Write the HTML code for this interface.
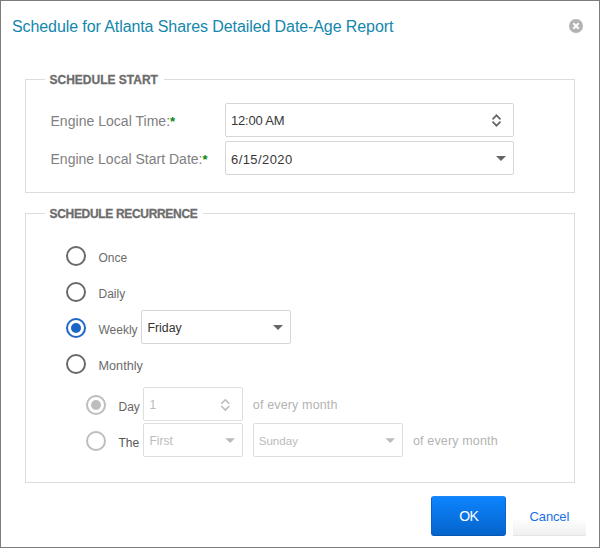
<!DOCTYPE html>
<html><head><meta charset="utf-8">
<style>
html,body{margin:0;padding:0;background:#fff;}
body{width:600px;height:548px;position:relative;overflow:hidden;font-family:"Liberation Sans",sans-serif;}
.frame{position:absolute;left:0;top:0;width:598px;height:546px;border:1px solid #7c7c7c;}
.t{position:absolute;white-space:nowrap;line-height:1;}
.fs{position:absolute;border:1px solid #dcdcdc;box-sizing:border-box;}
.gap{position:absolute;background:#fff;height:3px;}
.inp{position:absolute;border:1px solid #d6d6d6;border-radius:2px;box-sizing:border-box;background:#fff;}
.rad{position:absolute;width:20px;height:20px;border-radius:50%;box-sizing:border-box;border:2px solid #6a6a6a;}
.dot{position:absolute;left:3px;top:3px;width:10px;height:10px;border-radius:50%;}
svg{position:absolute;overflow:visible;}
</style></head>
<body>
<div class="frame"></div>

<div class="t" style="left:12px;top:18.6px;font-size:16px;color:#1387ab;letter-spacing:-0.09px">Schedule for Atlanta Shares Detailed Date-Age Report</div>

<!-- close icon -->
<svg style="left:569px;top:19px" width="14" height="14" viewBox="0 0 14 14">
  <circle cx="7" cy="7" r="7" fill="#b3b3b3"/>
  <path d="M4.3 4.3 L9.7 9.7 M9.7 4.3 L4.3 9.7" stroke="#fff" stroke-width="2.1" stroke-linecap="butt"/>
</svg>

<!-- fieldset 1 -->
<div class="fs" style="left:25px;top:79px;width:550px;height:114px;"></div>
<div class="gap" style="left:45px;top:78px;width:119px;"></div>
<div class="t" style="left:49.5px;top:73.8px;font-size:12px;font-weight:bold;color:#6c6c6c;-webkit-text-stroke:0.3px #6c6c6c;">SCHEDULE START</div>

<div class="t" style="left:50.5px;top:114.3px;font-size:14px;color:#808080;letter-spacing:0.03px">Engine Local Time:<span style="color:#0a870a;font-weight:bold;font-size:13px;position:relative;top:-0.5px;left:0px;letter-spacing:0">*</span></div>
<div class="t" style="left:50.5px;top:152.1px;font-size:14px;color:#808080;letter-spacing:0.01px">Engine Local Start Date:<span style="color:#0a870a;font-weight:bold;font-size:13px;position:relative;top:-0.5px;left:0px;letter-spacing:0">*</span></div>

<div class="inp" style="left:225px;top:103px;width:289px;height:34px;"></div>
<div class="t" style="left:231px;top:114.3px;font-size:13px;color:#383838;letter-spacing:-0.2px">12:00 AM</div>
<svg style="left:0;top:0" width="600" height="548">
  <path d="M492.5 119.3 L496.5 115.3 L500.5 119.3 M492.5 121.7 L496.5 125.7 L500.5 121.7" stroke="#666" stroke-width="1.7" fill="none"/>
</svg>

<div class="inp" style="left:225px;top:141px;width:289px;height:34px;"></div>
<div class="t" style="left:231px;top:152.5px;font-size:13px;color:#383838;letter-spacing:0.42px">6/15/2020</div>
<svg style="left:0;top:0" width="600" height="548">
  <path d="M496 156 L506 156 L501 161 Z" fill="#666"/>
</svg>

<!-- fieldset 2 -->
<div class="fs" style="left:25px;top:213px;width:550px;height:270px;"></div>
<div class="gap" style="left:45px;top:212px;width:158px;"></div>
<div class="t" style="left:49.5px;top:208.2px;font-size:12px;font-weight:bold;color:#6c6c6c;-webkit-text-stroke:0.3px #6c6c6c;letter-spacing:-0.32px">SCHEDULE RECURRENCE</div>

<div class="rad" style="left:66px;top:246px;"></div>
<div class="t" style="left:98.5px;top:252.1px;font-size:12px;color:#6b6b6b;">Once</div>
<div class="rad" style="left:66px;top:282px;"></div>
<div class="t" style="left:98.5px;top:288.1px;font-size:12px;color:#6b6b6b;">Daily</div>
<div class="rad" style="left:66px;top:318px;border-color:#1c67c6;"><div class="dot" style="background:#1c67c6"></div></div>
<div class="t" style="left:98.5px;top:324.2px;font-size:12px;color:#6b6b6b;">Weekly</div>
<div class="rad" style="left:66px;top:354px;"></div>
<div class="t" style="left:98.5px;top:359.9px;font-size:12.7px;color:#6b6b6b;">Monthly</div>

<div class="inp" style="left:141px;top:310px;width:150px;height:34px;"></div>
<div class="t" style="left:147.5px;top:322px;font-size:12.3px;color:#333;">Friday</div>
<svg style="left:0;top:0" width="600" height="548">
  <path d="M273 325 L283 325 L278 330 Z" fill="#666"/>
</svg>

<!-- monthly sub -->
<div class="rad" style="left:86px;top:395px;border-color:#bdbdbd;"><div class="dot" style="background:#bdbdbd"></div></div>
<div class="t" style="left:118.5px;top:400.6px;font-size:12px;color:#666;">Day</div>
<div class="rad" style="left:86px;top:431px;border-color:#bdbdbd;"></div>
<div class="t" style="left:118.5px;top:437px;font-size:12px;color:#555;">The</div>

<div class="inp" style="left:143px;top:387px;width:100px;height:34px;border-color:#dedede"></div>
<div class="t" style="left:149.5px;top:398.6px;font-size:12px;color:#bbb;">1</div>
<svg style="left:0;top:0" width="600" height="548">
  <path d="M221.3 403.8 L225.3 399.8 L229.3 403.8 M221.3 406 L225.3 410 L229.3 406" stroke="#bbb" stroke-width="1.6" fill="none"/>
</svg>
<div class="t" style="left:252.8px;top:399px;font-size:12.5px;color:#b3b3b3;letter-spacing:0.15px">of every month</div>

<div class="inp" style="left:143px;top:423px;width:100px;height:34px;border-color:#dedede"></div>
<div class="t" style="left:149.5px;top:435.2px;font-size:12px;color:#bbb;">First</div>
<svg style="left:0;top:0" width="600" height="548">
  <path d="M225.3 438.2 L235 438.2 L230.15 443 Z" fill="#bbb"/>
</svg>

<div class="inp" style="left:253px;top:423px;width:150px;height:34px;border-color:#dedede"></div>
<div class="t" style="left:258.7px;top:434.9px;font-size:11.6px;color:#bbb;">Sunday</div>
<svg style="left:0;top:0" width="600" height="548">
  <path d="M385.5 438.3 L395 438.3 L390.25 443 Z" fill="#bbb"/>
</svg>
<div class="t" style="left:413px;top:435px;font-size:12.5px;color:#b3b3b3;letter-spacing:0.15px">of every month</div>

<!-- buttons -->
<div style="position:absolute;left:431px;top:496px;width:75px;height:40px;box-sizing:border-box;border:1px solid #0a62d0;border-top-color:#1a88f8;border-bottom-color:#0458b8;border-radius:3px;background:linear-gradient(#0d84fe,#0564cb);"></div>
<div class="t" style="left:459.3px;top:509.3px;font-size:14px;color:#fff;letter-spacing:-0.8px">OK</div>

<div style="position:absolute;left:513px;top:520px;width:73px;height:16px;background:linear-gradient(#fdfdfd,#f0f0f0);border-bottom:1px solid #e6e6e6;box-sizing:border-box;"></div>
<div class="t" style="left:529.6px;top:509.8px;font-size:13px;color:#1a6ee8;letter-spacing:-0.15px">Cancel</div>

</body></html>
